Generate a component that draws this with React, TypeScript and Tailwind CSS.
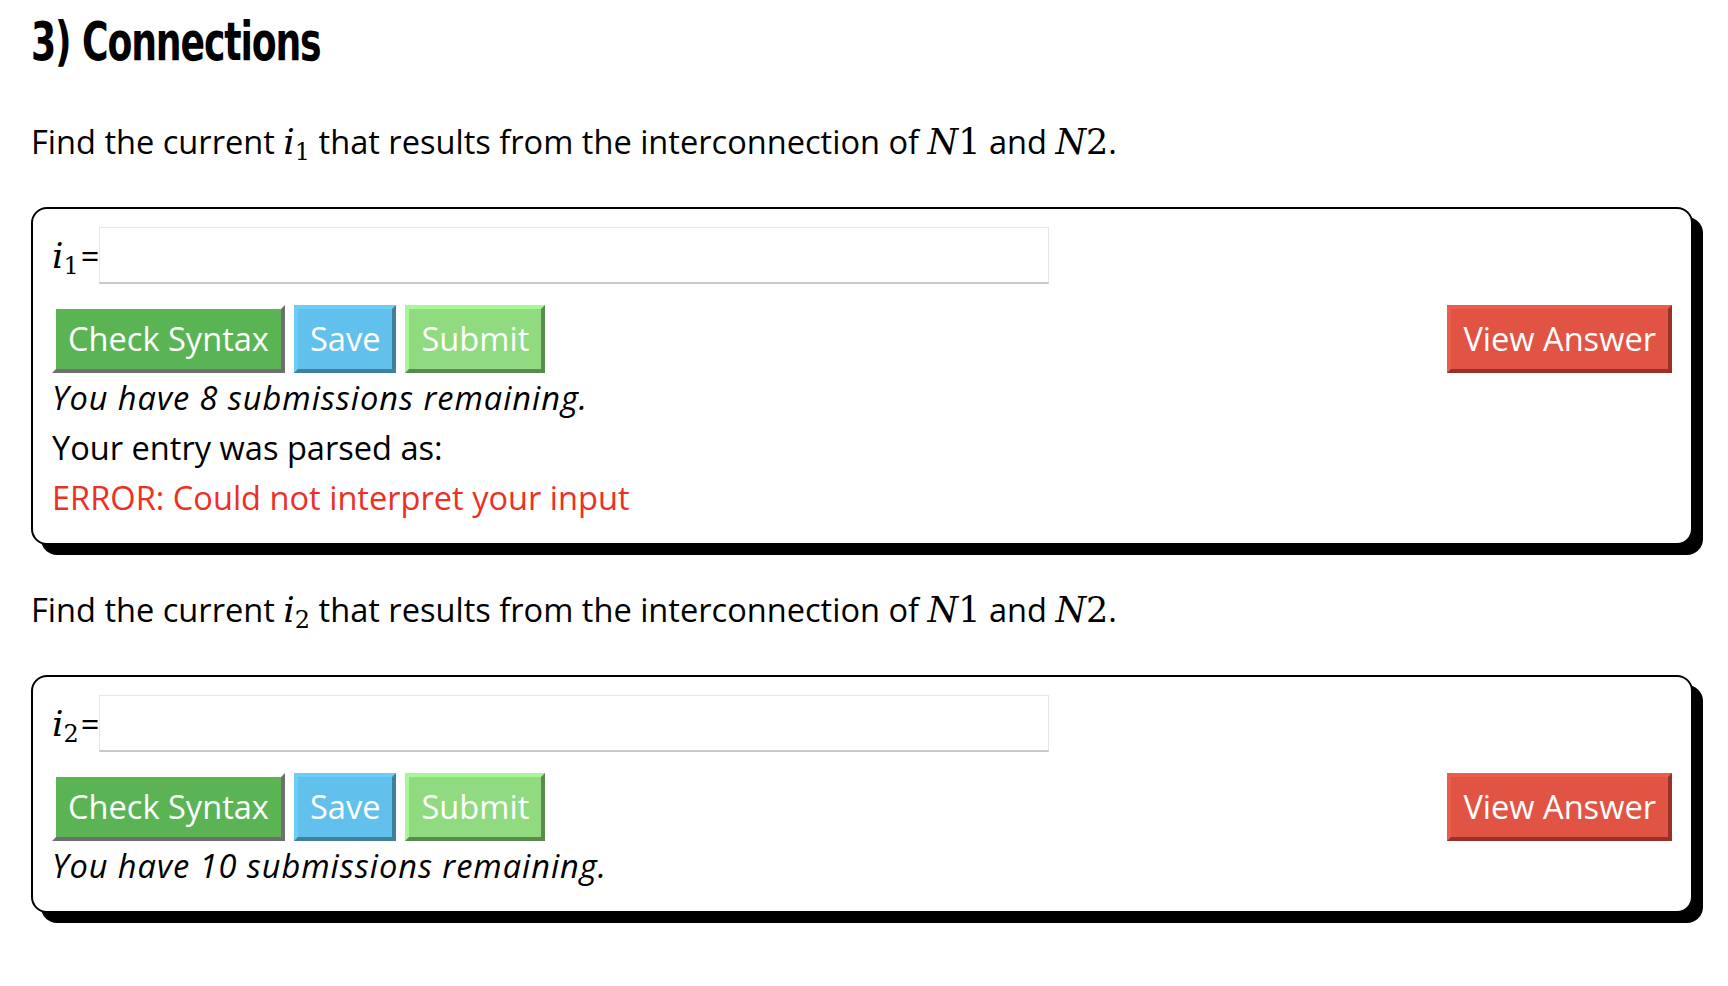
import React, { FC } from "react"

type Tone = "check" | "save" | "submit" | "answer"

const tones: Record<Tone, string> = {
	check: "bg-[#5bb454] border-t-white border-l-white border-r-[#6f6f6f] border-b-[#6f6f6f]",
	save: "bg-[#62c1ec] border-t-[#6dcdf8] border-l-[#6dcdf8] border-r-[#3f809d] border-b-[#3f809d]",
	submit: "bg-[#90da80] border-t-[#a5f895] border-l-[#a5f895] border-r-[#5b8a51] border-b-[#5b8a51]",
	answer: "bg-[#e15444] border-t-[#ec5c4b] border-l-[#ec5c4b] border-r-[#983228] border-b-[#983228]",
}

const Btn: FC<{ tone: Tone; label: string }> = ({ tone, label }) => (
	<button
		className={`h-[68px] border-4 border-solid px-3 py-[5px] text-[32.6px] leading-[50px] text-white ${tones[tone]}`}
	>
		{label}
	</button>
)

// inline math, KaTeX-ish
const Sym: FC<{ v: string; sub?: string }> = ({ v, sub }) => (
	<span className="font-['DejaVu_Serif',serif] text-[36px] leading-none">
		<span className="italic">{v}</span>
		{sub && <span className="align-[-6px] text-[24px]">{sub}</span>}
	</span>
)

const Net: FC<{ n: string }> = ({ n }) => (
	<span className="font-['DejaVu_Serif',serif] text-[35px] leading-none">
		<span className="italic">N</span>
		<span>{n}</span>
	</span>
)

interface CardProps {
	sub: string
	remaining: number
	parsed?: boolean
}

const AnswerCard: FC<CardProps> = ({ sub, remaining, parsed }) => (
	<div className="mt-10 rounded-[16px] border-2 border-black bg-white px-[19px] pt-[18px] pb-[20px] shadow-[10px_10px_0_0_#000]">
		<div className="flex h-[57px] items-center">
			<span className="shrink-0 whitespace-nowrap">
				<Sym v="i" sub={sub} />
				<span className="ml-[2px]">=</span>
			</span>
			<input
				type="text"
				className="h-[57px] w-[950px] border border-b-2 border-[#e6e6e6] border-b-[#c9c9c9] bg-white outline-none"
			/>
		</div>
		<div className="mt-[21px] flex items-start justify-between">
			<div className="flex gap-[9px]">
				<Btn tone="check" label="Check Syntax" />
				<Btn tone="save" label="Save" />
				<Btn tone="submit" label="Submit" />
			</div>
			<Btn tone="answer" label="View Answer" />
		</div>
		<div className="italic tracking-[0.95px]">You have {remaining} submissions remaining.</div>
		{parsed && (
			<>
				<div>Your entry was parsed as:</div>
				<div className="text-[#ec3024]">ERROR: Could not interpret your input</div>
			</>
		)}
	</div>
)

const App: FC = () => {
	return (
		<div className="min-h-screen bg-white pt-[13px] pr-[35px] pl-[31px] font-['Open_Sans',sans-serif] text-[32.6px] leading-[50px] text-black">
			<h1 className="h-[58px] origin-left scale-x-[0.745] font-['Liberation_Sans_Narrow','DejaVu_Sans_Condensed',sans-serif] text-[54px] leading-[58px] font-bold tracking-[-1.5px] whitespace-nowrap">
				3) Connections
			</h1>
			<p className="mt-[46px]">
				Find the current <Sym v="i" sub="1" /> that results from the interconnection of <Net n="1" /> and{" "}
				<Net n="2" />.
			</p>
			<AnswerCard sub="1" remaining={8} parsed />
			<p className="mt-[40px]">
				Find the current <Sym v="i" sub="2" /> that results from the interconnection of <Net n="1" /> and{" "}
				<Net n="2" />.
			</p>
			<AnswerCard sub="2" remaining={10} />
		</div>
	)
}

export default App
